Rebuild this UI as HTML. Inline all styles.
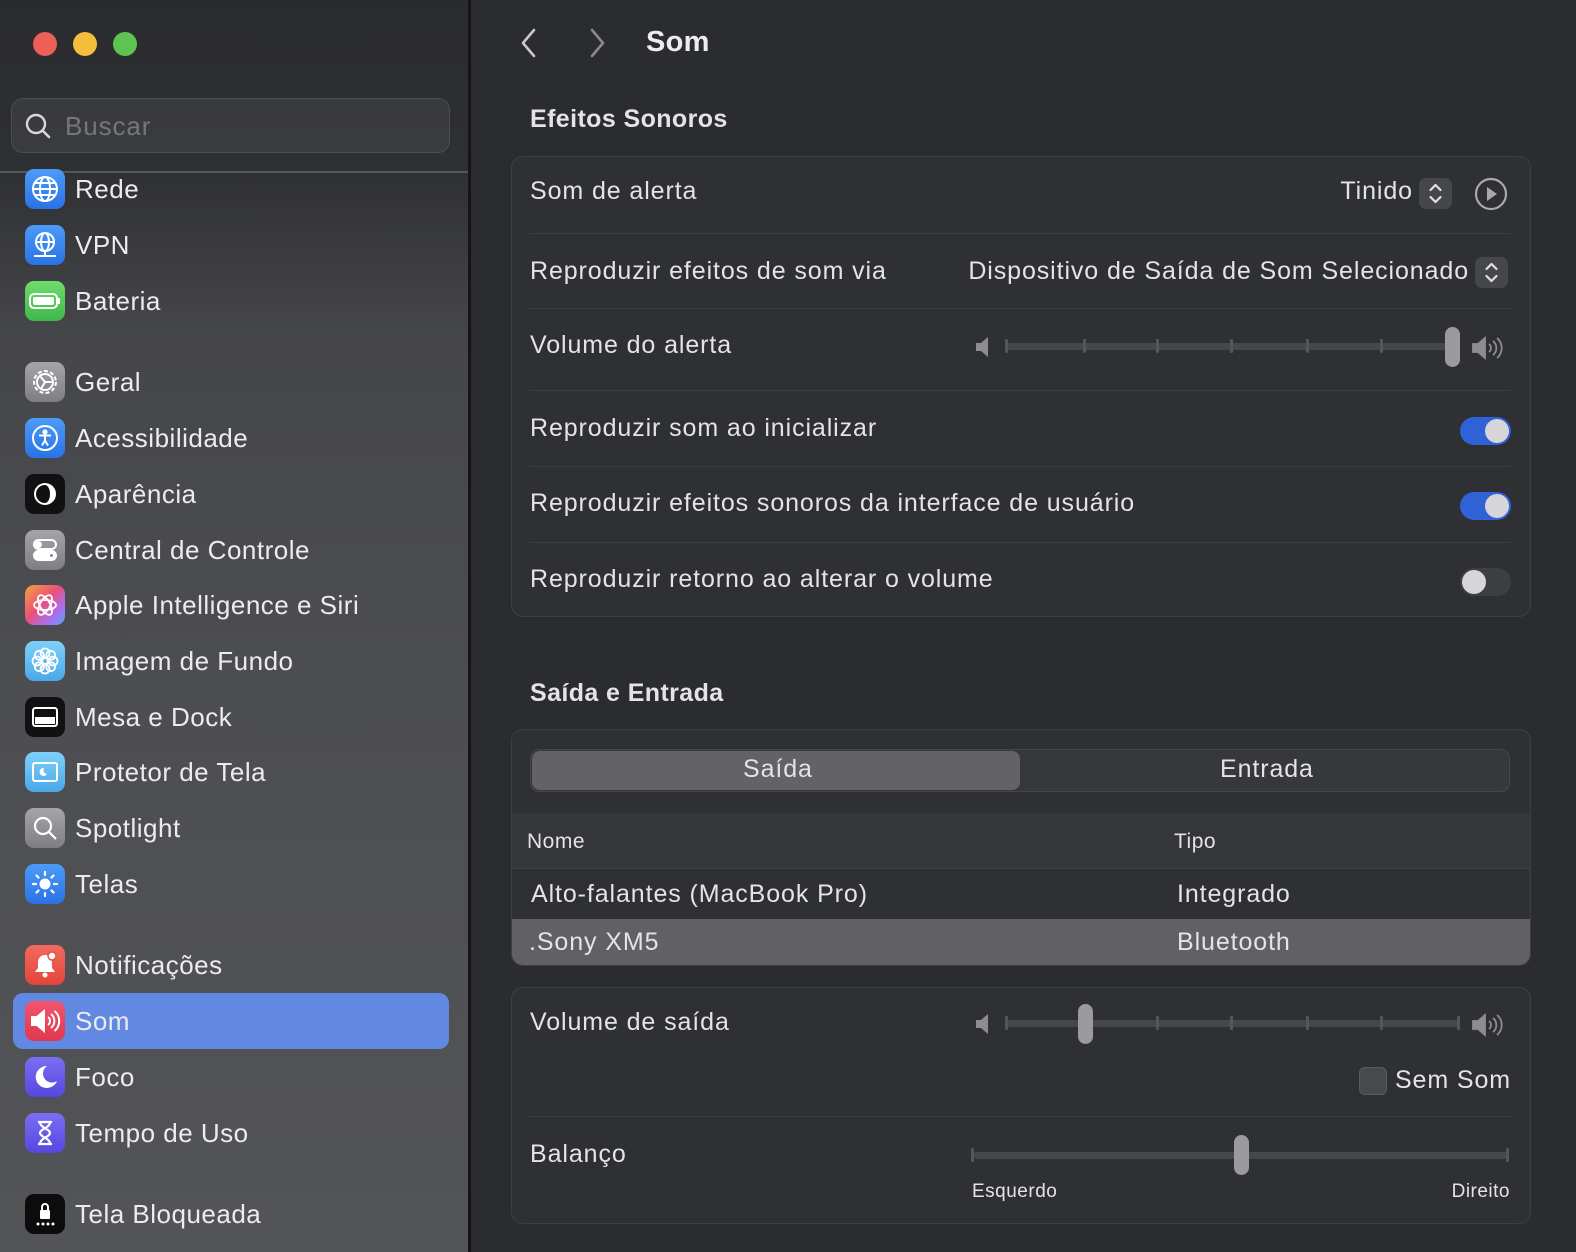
<!DOCTYPE html>
<html><head><meta charset="utf-8"><style>
*{margin:0;padding:0;box-sizing:border-box}
html,body{width:1576px;height:1252px;overflow:hidden}
body{background:#2b2c30;font-family:"Liberation Sans",sans-serif;color:#e6e6e8;position:relative}
.abs{position:absolute}
#side{left:0;top:0;width:468px;height:1252px;background:linear-gradient(180deg,#2a2b2f 0px,#2f3034 170px,#45464a 330px,#4d4e51 700px,#535457 1252px)}
#divider{left:468px;top:0;width:3px;height:1252px;background:#151517}
.dot{width:24px;height:24px;border-radius:50%;top:32px}
.item{position:absolute;left:25px;height:40px;display:flex;align-items:center}
.ic{width:40px;height:40px;border-radius:9px;display:flex;align-items:center;justify-content:center;flex:none}
.item span{margin-left:10px;font-size:26px;color:#ececee;white-space:nowrap;letter-spacing:0.5px}
.t{position:absolute;font-size:25px;color:#e4e4e6;white-space:nowrap;letter-spacing:0.9px}
.card{position:absolute;left:511px;width:1020px;background:#2f3034;border:1px solid #3e3f43;border-radius:12px}
.sep{position:absolute;left:530px;width:980px;height:1px;background:#3d3e42}
.tog{position:absolute;left:1460px;width:51px;height:28px;border-radius:14px;background:#2f62d6}
.tog i{position:absolute;top:2px;width:24px;height:24px;border-radius:50%;background:#d6d6d8}
.track{position:absolute;height:7px;background:#46474b;border-radius:4px}
.tick{position:absolute;width:3px;height:14px;background:#55565a;border-radius:1px}
.knob{position:absolute;width:15px;height:40px;border-radius:8px;background:#9b9b9e}
</style></head><body>
<div id="side" class="abs"></div>
<div id="divider" class="abs"></div>
<div class="abs dot" style="left:33px;background:#ec5f57"></div>
<div class="abs dot" style="left:73px;background:#f4bd3c"></div>
<div class="abs dot" style="left:113px;background:#5ec34f"></div>
<div class="abs" style="left:11px;top:98px;width:439px;height:55px;border-radius:12px;background:rgba(255,255,255,0.06);border:1px solid #4c4d51"></div>
<svg class="abs" style="left:24px;top:112px" width="28" height="28" viewBox="0 0 28 28"><circle cx="12" cy="12" r="9" fill="none" stroke="#d8d8da" stroke-width="2.4"/><path d="M18.5 18.5L25 25" stroke="#d8d8da" stroke-width="2.6" stroke-linecap="round"/></svg>
<div class="t" style="left:65px;top:111px;font-size:26px;color:#76777b">Buscar</div>
<div class="abs" style="left:0;top:171px;width:468px;height:2px;background:#55565a"></div>

<div class="abs" style="left:13px;top:993px;width:436px;height:56px;border-radius:10px;background:#6289e1"></div>

<div class="item" style="top:169px"><div class="ic" style="background:linear-gradient(#4c9bf8,#2a73e6)"><svg width="30" height="30" viewBox="0 0 30 30" fill="none" stroke="#fff" stroke-width="2"><circle cx="15" cy="15" r="12"/><ellipse cx="15" cy="15" rx="5" ry="12"/><path d="M3 15h24M5 9h20M5 21h20"/></svg></div><span>Rede</span></div>
<div class="item" style="top:225px"><div class="ic" style="background:linear-gradient(#4c9bf8,#2a73e6)"><svg width="30" height="30" viewBox="0 0 30 30" fill="none" stroke="#fff" stroke-width="2"><circle cx="15" cy="12" r="9"/><ellipse cx="15" cy="12" rx="4" ry="9"/><path d="M6 12h18M15 21v5M4 26h22"/></svg></div><span>VPN</span></div>
<div class="item" style="top:281px"><div class="ic" style="background:linear-gradient(#6fdc6c,#3fb84a)"><svg width="34" height="20" viewBox="0 0 34 20"><rect x="2" y="3" width="27" height="14" rx="4" fill="none" stroke="#fff" stroke-width="2"/><rect x="5" y="6" width="21" height="8" rx="2" fill="#fff"/><rect x="30" y="7" width="2" height="6" fill="#fff"/></svg></div><span>Bateria</span></div>

<div class="item" style="top:362px"><div class="ic" style="background:linear-gradient(#a5a5a9,#7e7e83)"><svg width="32" height="32" viewBox="0 0 32 32" fill="none" stroke="#fff" stroke-width="2"><circle cx="16" cy="16" r="11" stroke-dasharray="4 2.3"/><circle cx="16" cy="16" r="8"/><path d="M16 16l-5-6M16 16l7 0M16 16l-4 7"/></svg></div><span>Geral</span></div>
<div class="item" style="top:418px"><div class="ic" style="background:linear-gradient(#4c9bf8,#2a73e6)"><svg width="30" height="30" viewBox="0 0 30 30" fill="none" stroke="#fff" stroke-width="2"><circle cx="15" cy="15" r="12"/><circle cx="15" cy="9" r="1.6" fill="#fff"/><path d="M9 12.5h12M15 12.5v5l-3 5M15 17.5l3 5"/></svg></div><span>Acessibilidade</span></div>
<div class="item" style="top:474px"><div class="ic" style="background:#111"><svg width="30" height="30" viewBox="0 0 30 30"><circle cx="15" cy="15" r="11" fill="#fff"/><path d="M15 6a9 9 0 0 0 0 18a5 9 0 0 0 0-18z" fill="#111"/></svg></div><span>Aparência</span></div>
<div class="item" style="top:530px"><div class="ic" style="background:linear-gradient(#a5a5a9,#7e7e83)"><svg width="30" height="30" viewBox="0 0 30 30" fill="none" stroke="#fff" stroke-width="2"><rect x="4" y="5" width="22" height="9" rx="4.5"/><circle cx="8.5" cy="9.5" r="2.5" fill="#fff"/><rect x="4" y="16" width="22" height="9" rx="4.5" fill="#fff"/><circle cx="21.5" cy="20.5" r="2.5" fill="#888"/></svg></div><span>Central de Controle</span></div>
<div class="item" style="top:585px"><div class="ic" style="background:linear-gradient(135deg,#f2a33a,#ec4f7a 45%,#a86ff0 75%,#5aa7f7)"><svg width="30" height="30" viewBox="0 0 30 30" fill="none" stroke="#fff" stroke-width="1.8"><ellipse cx="15" cy="15" rx="11" ry="5"/><ellipse cx="15" cy="15" rx="11" ry="5" transform="rotate(60 15 15)"/><ellipse cx="15" cy="15" rx="11" ry="5" transform="rotate(120 15 15)"/></svg></div><span>Apple Intelligence e Siri</span></div>
<div class="item" style="top:641px"><div class="ic" style="background:linear-gradient(#7fd0f8,#4aa9ea)"><svg width="32" height="32" viewBox="0 0 32 32" fill="none" stroke="#fff" stroke-width="1.8"><circle cx="16" cy="16" r="3"/><circle cx="16" cy="8" r="4.5"/><circle cx="16" cy="24" r="4.5"/><circle cx="8" cy="16" r="4.5"/><circle cx="24" cy="16" r="4.5"/><circle cx="10.3" cy="10.3" r="4.5"/><circle cx="21.7" cy="21.7" r="4.5"/><circle cx="21.7" cy="10.3" r="4.5"/><circle cx="10.3" cy="21.7" r="4.5"/></svg></div><span>Imagem de Fundo</span></div>
<div class="item" style="top:697px"><div class="ic" style="background:#111"><svg width="30" height="30" viewBox="0 0 30 30" fill="none" stroke="#fff" stroke-width="2"><rect x="3" y="6" width="24" height="18" rx="2.5"/><rect x="6" y="16" width="18" height="5" fill="#fff"/></svg></div><span>Mesa e Dock</span></div>
<div class="item" style="top:752px"><div class="ic" style="background:linear-gradient(#7fd0f8,#4aa9ea)"><svg width="30" height="30" viewBox="0 0 30 30" fill="none" stroke="#fff" stroke-width="2"><rect x="3" y="6" width="24" height="18" rx="2"/><path d="M14 11a4 4 0 1 0 3 6a4 4 0 0 1-3-6z" fill="#fff" stroke="none"/></svg></div><span>Protetor de Tela</span></div>
<div class="item" style="top:808px"><div class="ic" style="background:linear-gradient(#a5a5a9,#7e7e83)"><svg width="30" height="30" viewBox="0 0 30 30" fill="none" stroke="#fff" stroke-width="2.2"><circle cx="13" cy="13" r="8"/><path d="M19 19l7 7"/></svg></div><span>Spotlight</span></div>
<div class="item" style="top:864px"><div class="ic" style="background:linear-gradient(#4c9bf8,#2a73e6)"><svg width="30" height="30" viewBox="0 0 30 30" fill="#fff" stroke="#fff" stroke-width="2.2" stroke-linecap="round"><circle cx="15" cy="15" r="5.5" stroke="none"/><path d="M15 3v3M15 24v3M3 15h3M24 15h3M6.5 6.5l2 2M21.5 21.5l2 2M6.5 23.5l2-2M21.5 8.5l2-2"/></svg></div><span>Telas</span></div>

<div class="item" style="top:945px"><div class="ic" style="background:linear-gradient(#f26a5e,#e5443b)"><svg width="30" height="30" viewBox="0 0 30 30" fill="#fff"><path d="M15 5c-5 0-7 4-7 8v5l-3 4h20l-3-4v-5c0-4-2-8-7-8z"/><circle cx="15" cy="25" r="2.5"/><circle cx="22" cy="6" r="4" stroke="#ea5046" stroke-width="1.5"/></svg></div><span>Notificações</span></div>
<div class="item" style="top:1001px"><div class="ic" style="background:linear-gradient(#f2566e,#e23650)"><svg width="32" height="30" viewBox="0 0 32 30" fill="none" stroke="#fff" stroke-width="2"><path d="M3 11h5l7-6v20l-7-6H3z" fill="#fff"/><path d="M19 11a5 5 0 0 1 0 8M22 8a9 9 0 0 1 0 14M25.5 5a13 13 0 0 1 0 20"/></svg></div><span>Som</span></div>
<div class="item" style="top:1057px"><div class="ic" style="background:linear-gradient(#7a6ff2,#5647e0)"><svg width="30" height="30" viewBox="0 0 30 30"><path d="M17 4a11 11 0 1 0 10 15a9 9 0 0 1-10-15z" fill="#fff"/></svg></div><span>Foco</span></div>
<div class="item" style="top:1113px"><div class="ic" style="background:linear-gradient(#7a6ff2,#5647e0)"><svg width="30" height="30" viewBox="0 0 30 30" fill="none" stroke="#fff" stroke-width="2.2"><path d="M8 4h14M8 26h14M10 4c0 6 10 7 10 11s-10 5-10 11M20 4c0 6-10 7-10 11s10 5 10 11"/></svg></div><span>Tempo de Uso</span></div>
<div class="item" style="top:1194px"><div class="ic" style="background:#0c0c0d"><svg width="30" height="30" viewBox="0 0 30 30" fill="#fff"><rect x="10" y="11" width="10" height="9" rx="1"/><path d="M12 11V8a3 3 0 0 1 6 0v3" fill="none" stroke="#fff" stroke-width="2"/><circle cx="8" cy="25" r="1.5"/><circle cx="13" cy="25" r="1.5"/><circle cx="18" cy="25" r="1.5"/><circle cx="23" cy="25" r="1.5"/></svg></div><span>Tela Bloqueada</span></div>

<!-- main -->
<svg class="abs" style="left:512px;top:26px" width="100" height="34" viewBox="0 0 100 34" fill="none" stroke-width="2.6" stroke-linecap="round" stroke-linejoin="round"><path d="M22 4L11 17l11 13" stroke="#c8c8ca"/><path d="M80 4l11 13-11 13" stroke="#8a8a8e"/></svg>
<div class="t" style="left:646px;top:26px;font-size:29px;font-weight:bold;color:#ededef;letter-spacing:0.3px">Som</div>
<div class="t" style="left:530px;top:105px;font-weight:bold;font-size:25px;letter-spacing:0.4px">Efeitos Sonoros</div>

<div class="card" style="top:156px;height:461px"></div>
<div class="t" style="left:530px;top:177px">Som de alerta</div>
<div class="t" style="right:163px;top:177px">Tinido</div>
<div class="abs" style="left:1419px;top:178px;width:33px;height:31px;border-radius:7px;background:#46474b"></div>
<svg class="abs" style="left:1419px;top:178px" width="33" height="31" viewBox="0 0 33 31" fill="none" stroke="#e0e0e2" stroke-width="2.2" stroke-linecap="round" stroke-linejoin="round"><path d="M11.5 12l5-5 5 5M11.5 19l5 5 5-5"/></svg>
<svg class="abs" style="left:1473px;top:176px" width="36" height="36" viewBox="0 0 36 36"><circle cx="18" cy="18" r="15" fill="none" stroke="#a9a9ad" stroke-width="2.2"/><path d="M14 11l10 7-10 7z" fill="#a9a9ad"/></svg>
<div class="sep" style="top:233px"></div>
<div class="t" style="left:530px;top:257px">Reproduzir efeitos de som via</div>
<div class="t" style="right:107px;top:257px">Dispositivo de Saída de Som Selecionado</div>
<div class="abs" style="left:1475px;top:257px;width:33px;height:31px;border-radius:7px;background:#46474b"></div>
<svg class="abs" style="left:1475px;top:257px" width="33" height="31" viewBox="0 0 33 31" fill="none" stroke="#e0e0e2" stroke-width="2.2" stroke-linecap="round" stroke-linejoin="round"><path d="M11.5 12l5-5 5 5M11.5 19l5 5 5-5"/></svg>
<div class="sep" style="top:308px"></div>
<div class="t" style="left:530px;top:331px">Volume do alerta</div>
<svg class="abs" style="left:974px;top:335px" width="20" height="24" viewBox="0 0 20 24"><path d="M2 8h5l7-6v20l-7-6H2z" fill="#8d8d91"/></svg>
<div class="track" style="left:1005px;top:343px;width:450px"></div>
<div class="tick" style="left:1005px;top:339px"></div><div class="tick" style="left:1083px;top:339px"></div><div class="tick" style="left:1156px;top:339px"></div><div class="tick" style="left:1230px;top:339px"></div><div class="tick" style="left:1306px;top:339px"></div><div class="tick" style="left:1380px;top:339px"></div>
<div class="knob" style="left:1445px;top:327px"></div>
<svg class="abs" style="left:1472px;top:334px" width="38" height="28" viewBox="0 0 38 28" fill="none" stroke="#8d8d91" stroke-width="1.8"><path d="M1 10h5l7-6v20l-7-6H1z" fill="#8d8d91"/><path d="M17 10a5 5 0 0 1 0 8M21 7a9 9 0 0 1 0 14M25 4a13 13 0 0 1 0 20"/></svg>
<div class="sep" style="top:390px"></div>
<div class="t" style="left:530px;top:414px">Reproduzir som ao inicializar</div>
<div class="tog" style="top:417px"><i style="left:25px"></i></div>
<div class="sep" style="top:466px"></div>
<div class="t" style="left:530px;top:489px">Reproduzir efeitos sonoros da interface de usuário</div>
<div class="tog" style="top:492px"><i style="left:25px"></i></div>
<div class="sep" style="top:542px"></div>
<div class="t" style="left:530px;top:565px">Reproduzir retorno ao alterar o volume</div>
<div class="tog" style="top:568px;background:#3d3e42"><i style="left:2px"></i></div>

<div class="t" style="left:530px;top:679px;font-weight:bold;letter-spacing:0.4px">Saída e Entrada</div>
<div class="card" style="top:729px;height:237px;overflow:hidden">
 <div class="abs" style="left:18px;top:19px;width:980px;height:43px;border-radius:9px;background:#37383c;border:1px solid #45464a"></div>
 <div class="abs" style="left:20px;top:21px;width:488px;height:39px;border-radius:8px;background:#636367"></div>
 <div class="t" style="left:231px;top:25px">Saída</div>
 <div class="t" style="left:708px;top:25px">Entrada</div>
 <div class="abs" style="left:0;top:83px;width:1020px;height:56px;background:#35363a;border-bottom:1px solid #404145"></div>
 <div class="t" style="left:15px;top:100px;font-size:21px;letter-spacing:0.5px">Nome</div>
 <div class="t" style="left:662px;top:100px;font-size:21px;letter-spacing:0.5px">Tipo</div>
 <div class="t" style="left:19px;top:150px">Alto-falantes (MacBook Pro)</div>
 <div class="t" style="left:665px;top:150px">Integrado</div>
 <div class="abs" style="left:0;top:189px;width:1020px;height:48px;background:#616165"></div>
 <div class="t" style="left:17px;top:198px">.Sony XM5</div>
 <div class="t" style="left:665px;top:198px">Bluetooth</div>
</div>

<div class="card" style="top:987px;height:237px"></div>
<div class="t" style="left:530px;top:1008px">Volume de saída</div>
<svg class="abs" style="left:974px;top:1012px" width="20" height="24" viewBox="0 0 20 24"><path d="M2 8h5l7-6v20l-7-6H2z" fill="#8d8d91"/></svg>
<div class="track" style="left:1005px;top:1020px;width:455px"></div>
<div class="tick" style="left:1005px;top:1016px"></div><div class="tick" style="left:1156px;top:1016px"></div><div class="tick" style="left:1230px;top:1016px"></div><div class="tick" style="left:1306px;top:1016px"></div><div class="tick" style="left:1380px;top:1016px"></div><div class="tick" style="left:1457px;top:1016px"></div>
<div class="knob" style="left:1078px;top:1004px"></div>
<svg class="abs" style="left:1472px;top:1011px" width="38" height="28" viewBox="0 0 38 28" fill="none" stroke="#8d8d91" stroke-width="1.8"><path d="M1 10h5l7-6v20l-7-6H1z" fill="#8d8d91"/><path d="M17 10a5 5 0 0 1 0 8M21 7a9 9 0 0 1 0 14M25 4a13 13 0 0 1 0 20"/></svg>
<div class="abs" style="left:1359px;top:1067px;width:28px;height:28px;border-radius:6px;background:#48494d;border:1px solid #5a5b5f"></div>
<div class="t" style="right:65px;top:1066px">Sem Som</div>
<div class="sep" style="top:1116px"></div>
<div class="t" style="left:530px;top:1140px">Balanço</div>
<div class="track" style="left:973px;top:1152px;width:536px"></div>
<div class="tick" style="left:971px;top:1148px"></div><div class="tick" style="left:1506px;top:1148px"></div>
<div class="knob" style="left:1234px;top:1135px"></div>
<div class="t" style="left:972px;top:1181px;font-size:19px;letter-spacing:0.5px">Esquerdo</div>
<div class="t" style="right:66px;top:1181px;font-size:19px;letter-spacing:0.5px">Direito</div>
</body></html>
